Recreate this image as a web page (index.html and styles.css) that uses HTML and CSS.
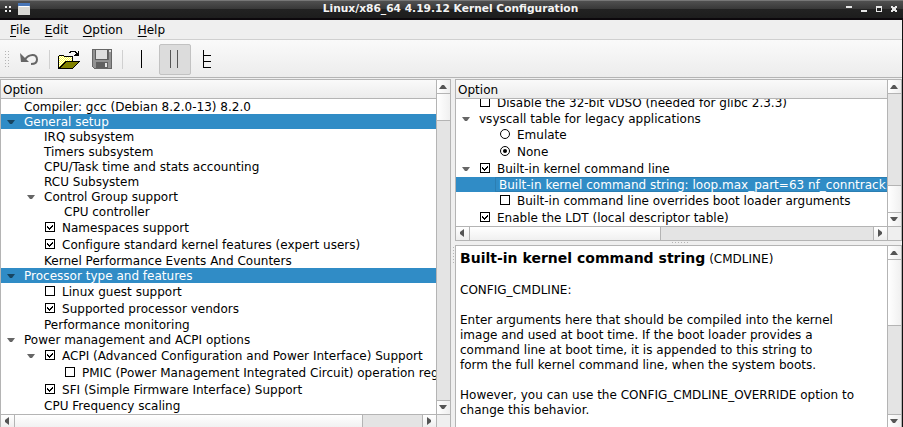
FILE: index.html
```html
<!DOCTYPE html>
<html lang="en">
<head>
<meta charset="utf-8">
<title>Linux/x86_64 4.19.12 Kernel Configuration</title>
<link rel="stylesheet" href="styles.css">
</head>
<body>
<svg class="defs" width="0" height="0">
  <defs>
    <symbol id="off" viewBox="0 0 11 11"><path d="M0 0h10v10h-10z" fill="#000"/><path d="M1 1h8v8h-8z" fill="#fff"/></symbol>
    <symbol id="on" viewBox="0 0 11 11"><path d="M0 0h10v10h-10z" fill="#000"/><path d="M1 1h8v8h-8z" fill="#fff"/><path d="M2 4h1v1h1v1h1v-1h1v-1h1v-1h1v2h-1v1h-1v1h-1v1h-1v-1h-1v-1h-1z" fill="#000"/></symbol>
    <symbol id="roff" viewBox="0 0 11 11"><circle cx="5" cy="5" r="4.5" fill="#fff" stroke="#000"/></symbol>
    <symbol id="ron" viewBox="0 0 11 11"><circle cx="5" cy="5" r="4.5" fill="#fff" stroke="#000"/><circle cx="5" cy="5" r="2" fill="#000"/></symbol>
    <symbol id="down" viewBox="0 0 8 4"><path d="M0 0h8l-3 4h-2z" fill="currentColor"/></symbol>
    <symbol id="up" viewBox="0 0 8 4"><path d="M0 4h8l-3-4h-2z" fill="currentColor"/></symbol>
    <symbol id="left" viewBox="0 0 4 8"><path d="M4 0v8l-4-3v-2z" fill="currentColor"/></symbol>
    <symbol id="right" viewBox="0 0 4 8"><path d="M0 0v8l4-3v-2z" fill="currentColor"/></symbol>
    <pattern id="hatch" width="2" height="2" patternUnits="userSpaceOnUse"><path d="M0 0h2v2h-2z" fill="#ffff40"/><path d="M0 0h1v1h-1zM1 1h1v1h-1z" fill="#fff"/></pattern>
    <pattern id="dots" width="3" height="3" patternUnits="userSpaceOnUse"><path d="M0 0h1v1h-1z" fill="#b4b4b4"/></pattern>
  </defs>
</svg>
<div class="window">
  <header class="titlebar">
    <svg class="title-left" width="36" height="20" shape-rendering="crispEdges">
      <path d="M5 6h2v2h-2zM9 6h2v2h-2zM5 10h2v2h-2zM9 10h2v2h-2z" fill="#eee"/>
      <path d="M18 3h12v12h-12z" fill="#d8d8d4"/><path d="M18 3h12v3h-12z" fill="#4977b8"/><path d="M19 6h10v1h-10z" fill="#fff"/>
    </svg>
    <h1>Linux/x86_64 4.19.12 Kernel Configuration</h1>
    <svg class="title-right" width="57" height="20" shape-rendering="crispEdges">
      <path d="M0 6h6v2h-6zM15 10h6v2h-6zM30 6h6v6h-6z" fill="#e6e6e6"/><path d="M31 8h4v3h-4z" fill="#222"/>
      <path d="M45 6h2v1h2v-1h2v2h-1v2h1v2h-2v-1h-2v1h-2v-2h1v-2h-1z" fill="#e6e6e6"/>
    </svg>
  </header>
  <div class="client">
    <nav class="menu"><span><u>F</u>ile</span><span><u>E</u>dit</span><span><u>O</u>ption</span><span><u>H</u>elp</span></nav>
    <div class="toolbar">
      <svg class="grip" width="6" height="18"><path d="M0 0h6v18h-6z" fill="url(#dots)"/></svg>
      <svg class="undo" width="20" height="15"><path d="M5 6.500C9 1 17 0 17 6.500c0 3-2 4.500-6 4.500" fill="none" stroke="#666" stroke-width="2"/><path d="M0 0l1 9h8z" fill="#666"/></svg>
      <i class="sep"></i>
      <svg class="open" width="23" height="20" shape-rendering="crispEdges">
        <path d="M.5 18V6.500l1-1h4l1 1h8v5" fill="url(#hatch)" stroke="#000"/>
        <path d="M1 18V7h13v5h-7z" fill="url(#hatch)"/>
        <path d="M1 18.500L8 11.500h13.500l-7 7z" fill="#808000" stroke="#000"/>
        <path d="M11 2.500h1v-1h5v1h1v1h1" fill="none" stroke="#000"/><path d="M21 1v5h-5v-1h1v-1h2v-1h1v-2z" fill="#000"/>
      </svg>
      <svg class="save" width="20" height="20" shape-rendering="crispEdges">
        <path d="M0 0h20v20h-18l-2-2z" fill="#666"/><path d="M1 1h2v10h14v-8h2v16h-16l-2-1z" fill="#929292"/>
        <path d="M3 1h13v10h-13z" fill="#5c5c5c"/><path d="M4 1h11v9h-11z" fill="#dedede"/><path d="M17 1h2v2h-2z" fill="#ddd"/>
        <path d="M4 13h12v6h-12z" fill="#606060"/><path d="M13 14h2v4h-2z" fill="#e6e6e6"/>
      </svg>
      <i class="sep"></i>
      <i class="single"></i>
      <div class="toggle"><i></i><i></i></div>
      <svg class="full" width="9" height="19" shape-rendering="crispEdges"><path d="M.5 0v18M0 5.500h8M0 11.500h8M0 17.500h8" fill="none" stroke="#000"/></svg>
    </div>
    <main>
      <section class="panel menu-panel">
        <div class="view">
          <div class="head">Option</div>
          <div class="tree">
            <div class="row"><b></b><span>Compiler: gcc (Debian 8.2.0-13) 8.2.0</span></div>
            <div class="row sel"><b><svg><use href="#down"/></svg></b><span>General setup</span></div>
            <div class="row l1"><b></b><span>IRQ subsystem</span></div>
            <div class="row l1"><b></b><span>Timers subsystem</span></div>
            <div class="row l1"><b></b><span>CPU/Task time and stats accounting</span></div>
            <div class="row l1"><b></b><span>RCU Subsystem</span></div>
            <div class="row l1"><b><svg><use href="#down"/></svg></b><span>Control Group support</span></div>
            <div class="row l2"><b></b><span>CPU controller</span></div>
            <div class="row l1 opt"><b></b><svg class="box"><use href="#on"/></svg><span>Namespaces support</span></div>
            <div class="row l1 opt"><b></b><svg class="box"><use href="#on"/></svg><span>Configure standard kernel features (expert users)</span></div>
            <div class="row l1"><b></b><span>Kernel Performance Events And Counters</span></div>
            <div class="row sel"><b><svg><use href="#down"/></svg></b><span>Processor type and features</span></div>
            <div class="row l1 opt"><b></b><svg class="box"><use href="#off"/></svg><span>Linux guest support</span></div>
            <div class="row l1 opt"><b></b><svg class="box"><use href="#on"/></svg><span>Supported processor vendors</span></div>
            <div class="row l1"><b></b><span>Performance monitoring</span></div>
            <div class="row"><b><svg><use href="#down"/></svg></b><span>Power management and ACPI options</span></div>
            <div class="row l1 opt"><b><svg><use href="#down"/></svg></b><svg class="box"><use href="#on"/></svg><span>ACPI (Advanced Configuration and Power Interface) Support</span></div>
            <div class="row l2 opt"><b></b><svg class="box"><use href="#off"/></svg><span>PMIC (Power Management Integrated Circuit) operation reg</span></div>
            <div class="row l1 opt"><b></b><svg class="box"><use href="#on"/></svg><span>SFI (Simple Firmware Interface) Support</span></div>
            <div class="row l1"><b></b><span>CPU Frequency scaling</span></div>
          </div>
        </div>
        <div class="vbar"><i class="btn"><svg><use href="#up"/></svg></i><i class="thumb t1"></i><i class="groove"></i><i class="btn end"><svg><use href="#down"/></svg></i></div>
        <div class="hbar"><i class="btn"><svg><use href="#left"/></svg></i><i class="thumb h1"></i><i class="groove"></i><i class="btn end"><svg><use href="#right"/></svg></i></div>
        <div class="corner"></div>
      </section>
      <div class="vsplit"><svg width="3" height="18"><path d="M0 0h1v18h-1z" fill="url(#dots)"/></svg></div>
      <div class="right">
        <section class="panel config-panel">
          <div class="view">
            <div class="head">Option</div>
            <div class="tree scrolled">
              <div class="row opt"><b></b><svg class="box"><use href="#off"/></svg><span>Disable the 32-bit vDSO (needed for glibc 2.3.3)</span></div>
              <div class="row"><b><svg><use href="#down"/></svg></b><span>vsyscall table for legacy applications</span></div>
              <div class="row l1 opt"><b></b><svg class="box"><use href="#roff"/></svg><span>Emulate</span></div>
              <div class="row l1 opt"><b></b><svg class="box"><use href="#ron"/></svg><span>None</span></div>
              <div class="row opt"><b><svg><use href="#down"/></svg></b><svg class="box"><use href="#on"/></svg><span>Built-in kernel command line</span></div>
              <div class="row l1 sel current"><b></b><span>Built-in kernel command string: loop.max_part=63 nf_conntrack.</span></div>
              <div class="row l1 opt"><b></b><svg class="box"><use href="#off"/></svg><span>Built-in command line overrides boot loader arguments</span></div>
              <div class="row opt"><b></b><svg class="box"><use href="#on"/></svg><span>Enable the LDT (local descriptor table)</span></div>
            </div>
          </div>
          <div class="vbar"><i class="btn"><svg><use href="#up"/></svg></i><i class="groove"></i><i class="thumb t2"></i><i class="btn end"><svg><use href="#down"/></svg></i></div>
          <div class="hbar"><i class="btn"><svg><use href="#left"/></svg></i><i class="thumb h2"></i><i class="groove"></i><i class="btn end"><svg><use href="#right"/></svg></i></div>
          <div class="corner"></div>
        </section>
        <div class="hsplit"><svg width="18" height="1"><path d="M0 0h18v1h-18z" fill="url(#dots)"/></svg></div>
        <section class="panel help-panel">
          <article>
            <h2><strong>Built-in kernel command string</strong> (CMDLINE)</h2>
            <p>CONFIG_CMDLINE:</p>
            <p>Enter arguments here that should be compiled into the kernel<br>image and used at boot time. If the boot loader provides a<br>command line at boot time, it is appended to this string to<br>form the full kernel command line, when the system boots.</p>
            <p>However, you can use the CONFIG_CMDLINE_OVERRIDE option to<br>change this behavior.</p>
          </article>
          <div class="vbar"><i class="btn"><svg><use href="#up"/></svg></i><i class="thumb t3"></i><i class="groove"></i><i class="btn end"><svg><use href="#down"/></svg></i></div>
        </section>
      </div>
    </main>
  </div>
</div>
</body>
</html>
```
FILE: styles.css
```css
* { box-sizing: border-box; }
body { margin: 0; overflow: hidden; font: 12px/15px "DejaVu Sans", sans-serif; letter-spacing: .012px; color: #000; }
svg { display: block; flex: none; }
.defs { position: absolute; }
i { font-style: normal; flex: none; }
.window { height: 427px; display: flex; flex-direction: column; background: #111; }
.titlebar { height: 20px; flex: none; display: flex; justify-content: space-between; background: linear-gradient(#777 0 1px, #505050 1px, #383838 9px, #222 9px, #1d1d1d 18px, #0c080c 18px); }
.titlebar h1 { margin: 0; padding-top: 1px; font-size: 10.670px; line-height: 15px; letter-spacing: 0; color: #f4f4f4; position: relative; left: 9.500px; }
.client { flex: 1; min-height: 0; display: flex; flex-direction: column; background: #efefef; margin-right: 1px; }
.menu { height: 20px; flex: none; display: flex; gap: 14.700px; padding: 3px 0 0 10px; border-bottom: 1px solid #d0d0d0; }
.menu u { text-underline-offset: 2px; text-decoration-thickness: 1px; }
.toolbar { height: 38px; flex: none; display: flex; align-items: flex-start; border-bottom: 1px solid #b4b4b4; background: linear-gradient(#fafafa, #ececec); }
.grip { margin: 11px 0 0 5px; }
.undo { margin: 13px 0 0 9px; }
.sep { width: 1px; height: 19px; margin: 10px 0 0 9px; background: #d0d0d0; }
.open { margin: 10px 0 0 8px; }
.save { margin: 9px 0 0 11px; }
.save + .sep { margin-left: 10px; }
.single { width: 1px; height: 18px; margin: 10px 0 0 18px; background: #000; }
.toggle { width: 32px; height: 31px; margin: 4px 0 0 17px; border: 1px solid #c2c2c2; border-radius: 2px; background: #dcdcdc; display: flex; gap: 6px; padding: 5px 0 0 10px; }
.toggle i { width: 1px; height: 18px; background: #555; }
.full { margin: 10px 0 0 12px; }
main { flex: 1; min-height: 0; padding-top: 1px; display: grid; grid-template-columns: 451px 4px 447px; }
.panel { border: 1px solid #b4b4b4; background: #fff; display: grid; grid-template-columns: minmax(0, 1fr) 15px; grid-template-rows: minmax(0, 1fr) 14px; min-height: 0; overflow: hidden; }
.panel { grid-template-columns: minmax(0, 1fr) 14px; }
.menu-panel { height: 350px; }
.right { display: flex; flex-direction: column; min-width: 0; min-height: 0; }
.config-panel { height: 162px; flex: none; }
.help-panel { height: 184px; flex: none; grid-template-rows: minmax(0, 1fr); }
.vsplit { padding: 168px 0 0 2px; }
.hsplit { height: 4px; flex: none; padding: 1px 0 0 217px; }
.view { min-width: 0; overflow: hidden; }
.head { height: 19px; padding: 3px 0 0 2px; border-bottom: 1px solid #b4b4b4; background: linear-gradient(#fafafa, #ececec); position: relative; }
.tree { overflow: hidden; }
.scrolled { margin-top: -5px; }
.scrolled .row:first-child { clip-path: inset(5px 0 0 0); }
.row { height: 15px; display: flex; white-space: nowrap; }
.row > span { padding-top: 1px; height: 16px; }
.row b { width: 23px; height: 15px; flex: none; padding: 5.500px 0 0 6px; color: #666; }
.row b svg { width: 8px; height: 4px; }
.opt { height: 17px; padding-top: 1px; }
.l1 { padding-left: 20px; }
.l2 { padding-left: 40px; }
.box { width: 11px; height: 11px; margin: 2px 6px 0 1px; }
.sel { background: #308cc6; color: #fff; }
.sel b { color: #174561; }
.current b { width: 20px; }
.row.current > span { flex: 1; height: 15px; padding: 0 0 0 3px; line-height: 15px; border: 1px solid #2b7eb2; border-right: 0; margin-left: -1px; }
.vbar, .hbar { display: flex; background: #e4e4e4; border-left: 1px solid #b4b4b4; min-height: 0; }
.vbar { flex-direction: column; }
.hbar { border-left: 0; border-top: 1px solid #b4b4b4; }
.panel .hbar { grid-column: 1; }
.groove { flex: 1; }
.btn { display: flex; align-items: center; justify-content: center; background: #fafafa; color: #555; }
.vbar i { border-bottom: 1px solid #b4b4b4; }
.vbar .btn { height: 14px; background: linear-gradient(90deg, #fff, #eee); }
.vbar .btn.end { height: 13px; border: 0; padding-bottom: 1px; }
.vbar .btn svg { width: 8px; height: 4px; margin-right: 1px; }
.vbar .thumb { background: linear-gradient(90deg, #fff, #f0f0f0); }
.hbar i { border-right: 1px solid #b4b4b4; }
.hbar .btn { width: 14px; background: linear-gradient(#fff, #eee); padding-right: 1px; }
.hbar .btn.end { width: 13px; border: 0; padding-right: 2px; }
.hbar .btn svg { width: 4px; height: 8px; margin-bottom: 1px; }
.hbar .thumb { background: linear-gradient(#fff, #f0f0f0); }
.corner { background: #efefef; border: 1px solid #b4b4b4; border-width: 1px 0 0 1px; }
.t1 { height: 27px; }
.t2 { height: 27px; }
.t3 { height: 66px; }
.h1 { width: 348px; }
.h2 { width: 191px; }
article { padding: 3px 0 0 4px; overflow: hidden; white-space: nowrap; }
article h2 { margin: 0 0 15px; font-size: 12px; font-weight: normal; line-height: 18px; }
article strong { font-size: 14px; }
article p { margin: 0 0 15px; }
```
